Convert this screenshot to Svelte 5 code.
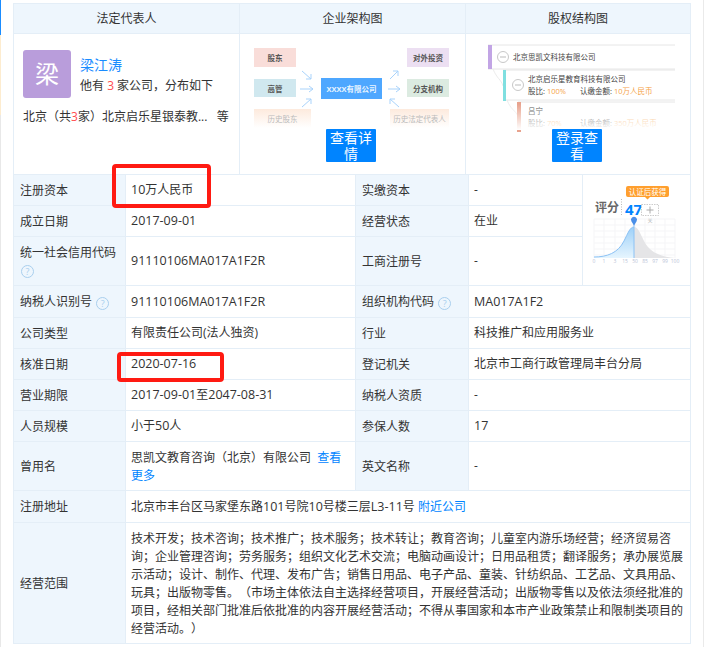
<script>
	const bands = [12, 22, 33, 43, 53, 63, 73, 83, 93];
	const ticks = ['0', '1', '3', '15', '50', '85', '97', '99', '100'];
</script>

<div class="page">
	<span class="edge"></span>
	<span class="edge-right"></span>

	<div class="panel">
		<section>
			<h3>法定代表人</h3>
			<div class="body person">
				<div class="who">
					<div class="avatar">梁</div>
					<div>
						<a class="name">梁江涛</a>
						<p>他有 <b>3</b> 家公司，分布如下</p>
					</div>
				</div>
				<p class="where">北京（共<b>3</b>家）北京启乐星银泰教... &nbsp;&nbsp;等</p>
			</div>
		</section>

		<section>
			<h3>企业架构图</h3>
			<div class="body">
				<svg class="sketch" width="226" height="140" viewBox="0 0 226 140">
					<defs>
						<linearGradient id="fadeL" x1="0" y1="0" x2="0" y2="1">
							<stop offset="0" stop-color="#fdeadd" />
							<stop offset="1" stop-color="#fff" />
						</linearGradient>
					</defs>
					<rect x="14" y="14" width="42" height="19" fill="#f9ddd9" />
					<rect x="14" y="45" width="42" height="18" fill="#d0e8ef" />
					<rect x="14" y="75" width="57" height="19" fill="url(#fadeL)" />
					<rect x="81" y="44" width="61" height="21" fill="#4ea7ff" />
					<rect x="167" y="14" width="42" height="19" fill="#ecdff2" />
					<rect x="167" y="45" width="42" height="18" fill="#dcebe1" />
					<rect x="150" y="75" width="59" height="19" fill="url(#fadeL)" />
					<g class="lbl">
						<text x="35" y="27">股东</text>
						<text x="35" y="58">高管</text>
						<text x="42.500" y="88" class="dim">历史股东</text>
						<text x="188" y="27">对外投资</text>
						<text x="188" y="58">分支机构</text>
						<text x="179.500" y="88" class="dim">历史法定代表人</text>
						<text x="111.500" y="58" class="on">XXXX有限公司</text>
					</g>
					<g class="arrows">
						<path d="M62 37 L71 45 M71 40 V45 H66" />
						<path d="M60 55 H73 M69 52 L73 55 L69 58" />
						<path d="M62 73 L71 65 M66 65 H71 V70" />
						<path d="M148 55 H160 M156 52 L160 55 L156 58" />
						<path d="M150 45 L158 37 M153 37 H158 V42" />
						<path d="M159 73 L150 65 M150 70 V65 H155" />
					</g>
				</svg>
				<button>查看详情</button>
			</div>
		</section>

		<section>
			<h3>股权结构图</h3>
			<div class="body">
				<svg class="sketch" width="226" height="140" viewBox="0 0 226 140">
					<defs>
						<linearGradient id="fadeB" x1="0" y1="0" x2="0" y2="1">
							<stop offset="0" stop-color="#fff" stop-opacity="0" />
							<stop offset="1" stop-color="#fff" />
						</linearGradient>
					</defs>
					<g class="lines">
						<path d="M22 11 H209 M22 35 H209 M37 36 H209 M37 66 H209 M52 68 H209" />
						<path class="wire" d="M27 35 C31 45 35 45 37 52 M41 66 C45 76 49 76 52 82" />
					</g>
					<rect x="22" y="11" width="4" height="24" fill="#c2a5e5" />
					<rect x="37" y="36" width="3" height="31" fill="#7fdfe0" />
					<rect x="51" y="68" width="4" height="30" fill="#e8a38e" />
					<g class="toggle">
						<circle cx="37" cy="23" r="5.500" />
						<path d="M34 23 H40" />
						<circle cx="52" cy="51" r="5.500" />
						<path d="M49 51 H55" />
					</g>
					<g class="tree">
						<text x="47" y="26">北京思凯文科技有限公司</text>
						<text x="62" y="48">北京启乐星教育科技有限公司</text>
						<text x="62" y="60">股比: <tspan>100%</tspan></text>
						<text x="114" y="60">认缴金额: <tspan>10万人民币</tspan></text>
						<text x="62" y="80">吕宁</text>
						<text x="62" y="92">股比: <tspan>70%</tspan></text>
						<text x="114" y="92">认缴金额: <tspan>350万人民币</tspan></text>
					</g>
					<rect x="20" y="70" width="195" height="26" fill="url(#fadeB)" />
				</svg>
				<button>登录查看</button>
			</div>
		</section>
	</div>

	<table>
		<colgroup>
			<col class="c1" />
			<col class="c2" />
			<col class="c3" />
			<col class="c4" />
			<col />
		</colgroup>
		<tbody>
			<tr>
				<th>注册资本</th>
				<td><span class="n">10</span>万人民币</td>
				<th>实缴资本</th>
				<td>-</td>
				<td rowspan="3" class="score">
					<svg width="108" height="110" viewBox="1 0 108 110">
						<defs>
							<linearGradient id="blueFill" x1="0" y1="0" x2="0" y2="1">
								<stop offset="0" stop-color="#9dd0f8" />
								<stop offset="1" stop-color="#e6f5fe" />
							</linearGradient>
						</defs>
						<path class="tagbox" d="M46 11 H85 Q87 11 87 13 V20 Q87 22 85 22 H68 L65.500 24.500 L63 22 H46 Q44 22 44 20 V13 Q44 11 46 11 Z" />
						<text class="tag" x="65.500" y="19.500">认证后获得</text>
						<text class="pf" x="13" y="37">评分</text>
						<path class="dash" d="M39.500 24 V41" />
						<text class="val" x="43" y="40">47</text>
						<rect class="plus" x="59.500" y="29.500" width="17" height="11" />
						<path class="plusmark" d="M64.500 35 H71.500 M68 31.500 V38.500" />
						<text class="small" x="68" y="47">关</text>
						<g class="grid">
							{#each [44, 50, 56, 62, 68, 74, 80] as y}
								<path d="M12 {y} H93" />
							{/each}
							{#each bands as x}
								<path d="M{x} 44 V83" />
							{/each}
						</g>
						<path fill="url(#blueFill)" d="M12 82 C25 82 36 78 42 66 C46 58 48 52 52 52 V83 H12 Z" />
						<path fill="#e5e5e7" d="M52 52 C56 52 58 58 62 66 C68 78 80 82 93 83 H52 Z" />
						<path class="curve" d="M12 82 C25 82 36 78 42 66 C46 58 48 52 52 52" />
						<path class="mark" d="M52 48 V83" />
						<path class="pin" d="M52 50.500 L49.500 46.500 A3 3 0 1 1 54.500 46.500 Z" />
						{#each ticks as t, i}
							<text class="tick" x={bands[i]} y="88">{t}</text>
						{/each}
					</svg>
				</td>
			</tr>
			<tr>
				<th>成立日期</th>
				<td><span class="n">2017-09-01</span></td>
				<th>经营状态</th>
				<td>在业</td>
			</tr>
			<tr class="tall">
				<th>统一社会信用代码 <i class="help">?</i></th>
				<td><span class="n">91110106MA017A1F2R</span></td>
				<th>工商注册号</th>
				<td>-</td>
			</tr>
			<tr class="r32">
				<th>纳税人识别号 <i class="help">?</i></th>
				<td><span class="n">91110106MA017A1F2R</span></td>
				<th>组织机构代码 <i class="help">?</i></th>
				<td colspan="2"><span class="n">MA017A1F2</span></td>
			</tr>
			<tr>
				<th>公司类型</th>
				<td>有限责任公司(法人独资)</td>
				<th>行业</th>
				<td colspan="2">科技推广和应用服务业</td>
			</tr>
			<tr>
				<th>核准日期</th>
				<td><span class="n">2020-07-16</span></td>
				<th>登记机关</th>
				<td colspan="2">北京市工商行政管理局丰台分局</td>
			</tr>
			<tr>
				<th>营业期限</th>
				<td><span class="n">2017-09-01</span>至<span class="n">2047-08-31</span></td>
				<th>纳税人资质</th>
				<td colspan="2">-</td>
			</tr>
			<tr>
				<th>人员规模</th>
				<td>小于<span class="n">50</span>人</td>
				<th>参保人数</th>
				<td colspan="2"><span class="n">17</span></td>
			</tr>
			<tr class="tall">
				<th>曾用名</th>
				<td class="used">思凯文教育咨询（北京）有限公司 &nbsp;<a>查看更多</a></td>
				<th>英文名称</th>
				<td colspan="2">-</td>
			</tr>
			<tr class="r32">
				<th>注册地址</th>
				<td colspan="4">北京市丰台区马家堡东路<span class="n">101</span>号院<span class="n">10</span>号楼三层<span class="n">L3-11</span>号 <a>附近公司</a></td>
			</tr>
			<tr>
				<th>经营范围</th>
				<td colspan="4" class="scope">技术开发；技术咨询；技术推广；技术服务；技术转让；教育咨询；儿童室内游乐场经营；经济贸易咨询；企业管理咨询；劳务服务；组织文化艺术交流；电脑动画设计；日用品租赁；翻译服务；承办展览展示活动；设计、制作、代理、发布广告；销售日用品、电子产品、童装、针纺织品、工艺品、文具用品、玩具；出版物零售。（市场主体依法自主选择经营项目，开展经营活动；出版物零售以及依法须经批准的项目，经相关部门批准后依批准的内容开展经营活动；不得从事国家和本市产业政策禁止和限制类项目的经营活动。）</td>
			</tr>
		</tbody>
	</table>

	<span class="mark-box first"></span>
	<span class="mark-box second"></span>
</div>

<style>
	:global(body) { margin: 0; background: #fff; }
	.page { position: relative; width: 705px; height: 647px; overflow: hidden; box-sizing: border-box; padding: 3px 0 0 13px; font: 12px/18px "Open Sans", "Noto Sans CJK SC", sans-serif; color: #333; text-spacing-trim: space-all; }
	.edge { position: absolute; left: 0; top: 0; width: 1px; height: 647px; background: linear-gradient(#1a8cff 0 35px, #fdeccf 35px 115px, #e8e8e8 115px); }
	.edge-right { position: absolute; left: 703px; top: 0; width: 1px; height: 647px; background: #eaeaea; }

	.panel { display: grid; grid-template-columns: 225px 226px 225px; width: 678px; box-sizing: border-box; border: 1px solid #e4eef7; border-bottom: 0; }
	section { position: relative; min-width: 0; border-left: 1px solid #e4eef7; }
	section:first-child { border-left: 0; }
	h3 { margin: 0; height: 30px; box-sizing: border-box; border-bottom: 1px solid #e4eef7; background: #eef6fd; text-align: center; font-size: 12px; font-weight: 400; line-height: 30px; }
	.body { position: relative; height: 140px; }
	.person { box-sizing: border-box; padding: 16px 9px 0; }
	.who { display: flex; gap: 9px; align-items: center; }
	.avatar { width: 48px; height: 48px; border-radius: 3px; background: #b99ddb; color: #fff; font-size: 24px; line-height: 48px; text-align: center; }
	.name { display: block; margin-top: 2px; font-size: 14px; line-height: 20px; color: #1a8cff; }
	p { margin: 1px 0 0; line-height: 20px; white-space: nowrap; }
	b { font-weight: 400; color: #ff4d4f; }
	.where { margin-top: 9px; }
	.sketch { display: block; position: absolute; left: 0; top: 0; }
	button { position: absolute; left: 86px; top: 95px; width: 50px; height: 33px; padding: 0 4px; border: 0; border-radius: 1px; background: #0084ff; color: #fff; font: 14px/16px "Open Sans", "Noto Sans CJK SC", sans-serif; }

	.lbl text { font-size: 7.500px; font-weight: 700; fill: #555; text-anchor: middle; }
	.lbl text.dim { fill: #bbb; font-weight: 400; }
	.lbl text.on { fill: #eaf5ff; }
	.arrows path { fill: none; stroke: #a9d3fb; stroke-width: 1; }
	.lines path { fill: none; stroke: #e6e6e6; stroke-width: 1; }
	.lines .wire { stroke: #ececec; }
	.toggle circle { fill: #fff; stroke: #c8c8c8; }
	.toggle path { stroke: #bbb; fill: none; }
	.tree text { font-size: 7.500px; fill: #444; }
	.tree tspan { fill: #f5a44a; }

	table { width: 678px; border-collapse: collapse; table-layout: fixed; }
	.c1 { width: 112px; }
	.c2 { width: 230px; }
	.c3 { width: 113px; }
	.c4 { width: 114px; }
	tr { height: 31px; }
	tr.tall { height: 49px; }
	tr.r32 { height: 32px; }
	th, td { padding: 0 6px 0 5px; border: 1px solid #e4eef7; font-weight: 400; text-align: left; line-height: 18px; word-break: break-all; }
	th { padding-left: 6px; background: #eef6fd; line-height: 17px; }
	a { color: #0084ff; }
	.n { font-size: 12.500px; }
	.help { display: inline-block; width: 11px; height: 11px; margin-left: 1px; border: 1px solid #a9cfee; border-radius: 50%; color: #a9cfee; font: 9px/11px "Open Sans", sans-serif; text-align: center; vertical-align: -1px; }
	.used { padding-top: 2px; }
	.scope { padding-top: 7px; padding-bottom: 5px; height: 108px; }
	.score { padding: 0; }
	.score svg { display: block; }

	.tagbox { fill: #ff9f2e; }
	.tag { font-size: 7.500px; fill: #fff; text-anchor: middle; }
	.pf { font-size: 12px; font-weight: 700; fill: #666; }
	.dash { stroke: #bbb; stroke-dasharray: 1 1.500; fill: none; }
	.val { font: 700 15px "Open Sans", sans-serif; fill: #0084ff; }
	.plus { fill: #fff; stroke: #ccc; stroke-dasharray: 1.500 1; }
	.plusmark { stroke: #aaa; stroke-width: 1; fill: none; }
	.small { font-size: 5px; fill: #aaa; text-anchor: middle; }
	.grid path { stroke: #f5f5f7; stroke-width: 1; fill: none; }
	.curve { fill: none; stroke: #8cc2f5; stroke-width: 1; }
	.mark { stroke: #8cc2f5; stroke-width: 1; fill: none; }
	.pin { fill: #4a8fe8; }
	.tick { font: 5px "Open Sans", sans-serif; fill: #b9c3d6; text-anchor: middle; }

	.mark-box { position: absolute; box-sizing: border-box; border: 4px solid #ff1a12; border-radius: 4px; }
	.first { left: 112px; top: 164px; width: 99px; height: 44px; }
	.second { left: 117px; top: 352px; width: 107px; height: 30px; }
</style>
